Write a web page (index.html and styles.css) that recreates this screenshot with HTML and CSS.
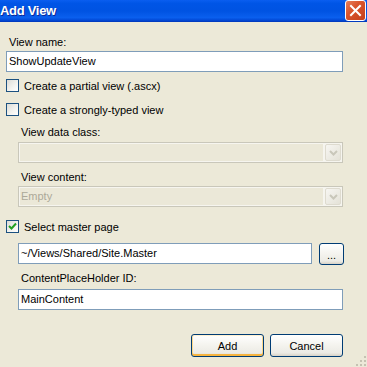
FILE: index.html
```html
<!DOCTYPE html>
<html lang="en">
<head>
    <meta charset="UTF-8">
    <title>Add View</title>
    <link rel="stylesheet" href="styles.css">
</head>
<body>
    <div class="dialog">
        <div class="titlebar">
            <span class="title">Add View</span>
            <div class="close-btn">
                <svg width="13" height="13" viewBox="0 0 13 13">
                    <path d="M2 2 L11 11 M11 2 L2 11" stroke="#fff" stroke-width="2" stroke-linecap="square"/>
                </svg>
            </div>
        </div>

        <div class="content">
            <div class="label first">View name:</div>
            <div class="textbox name-box">ShowUpdateView</div>

            <div class="check-row partial-row">
                <span class="box"></span>
                <span>Create a partial view (.ascx)</span>
            </div>
            <div class="check-row typed-row">
                <span class="box"></span>
                <span>Create a strongly-typed view</span>
            </div>

            <div class="label indent class-label">View data class:</div>
            <div class="select indent">
                <div class="select-field"></div>
                <div class="select-arrow">
                    <svg width="9" height="6" viewBox="0 0 9 6"><path d="M1 1 L4.5 4.5 L8 1" stroke="#c9c7ba" stroke-width="2" fill="none"/></svg>
                </div>
            </div>

            <div class="label indent content-label">View content:</div>
            <div class="select indent">
                <div class="select-field">Empty</div>
                <div class="select-arrow">
                    <svg width="9" height="6" viewBox="0 0 9 6"><path d="M1 1 L4.5 4.5 L8 1" stroke="#c9c7ba" stroke-width="2" fill="none"/></svg>
                </div>
            </div>

            <div class="check-row master-row">
                <span class="box">
                    <svg width="11" height="11" viewBox="0 0 11 11"><path d="M2 5 L4.5 7.5 L9 2.5" stroke="#21a121" stroke-width="2" fill="none"/></svg>
                </span>
                <span>Select master page</span>
            </div>

            <div class="master-line indent">
                <div class="textbox master-box">~/Views/Shared/Site.Master</div>
                <div class="xp-btn browse-btn">...</div>
            </div>

            <div class="label indent holder-label">ContentPlaceHolder ID:</div>
            <div class="textbox indent">MainContent</div>
        </div>

        <div class="footer">
            <div class="xp-btn default">Add</div>
            <div class="xp-btn">Cancel</div>
        </div>

        <svg class="grip" width="12" height="12" viewBox="0 0 12 12">
            <rect x="10" y="2" width="2" height="2" fill="#c5c2b2"/>
            <rect x="6" y="6" width="2" height="2" fill="#c5c2b2"/>
            <rect x="10" y="6" width="2" height="2" fill="#c5c2b2"/>
            <rect x="2" y="10" width="2" height="2" fill="#c5c2b2"/>
            <rect x="6" y="10" width="2" height="2" fill="#c5c2b2"/>
            <rect x="10" y="10" width="2" height="2" fill="#c5c2b2"/>
        </svg>
    </div>
</body>
</html>
```

FILE: styles.css
```css
* {
    box-sizing: border-box;
}
body {
    margin: 0;
    background: #ece9d8;
    font-family: "Liberation Sans", Arial, sans-serif;
    font-size: 11px;
    color: #000;
}
.dialog {
    width: 367px;
    height: 367px;
    position: relative;
    overflow: hidden;
    display: flex;
    flex-direction: column;
}
.titlebar {
    height: 22px;
    flex: none;
    display: flex;
    align-items: flex-start;
    justify-content: space-between;
    background: linear-gradient(to bottom, #0a5ef0 0%, #0055e6 15%, #0053e2 50%, #0a5fee 80%, #0249d6 92%, #0036b8 100%);
    padding-right: 1px;
}
.title {
    margin-left: 0;
    margin-top: 3px;
    font-size: 13px;
    font-weight: bold;
    letter-spacing: -0.3px;
    color: #fff;
    text-shadow: 1px 1px 0 #0a2a9a;
}
.close-btn {
    width: 21px;
    height: 21px;
    border: 1px solid #fff;
    border-radius: 3px;
    background: linear-gradient(135deg, #e8805c 0%, #d9542c 40%, #c4401c 100%);
    display: flex;
    align-items: center;
    justify-content: center;
}
.content {
    display: flex;
    flex-direction: column;
    padding: 0 24px 0 6px;
}
.label {
    height: 14px;
    line-height: 14px;
    padding-left: 3px;
}
.indent {
    margin-left: 12px;
}
.first {
    margin-top: 13px;
}
.class-label {
    margin-top: 9px;
}
.content-label {
    margin-top: 7px;
}
.holder-label {
    margin-top: 6px;
}
.textbox {
    height: 21px;
    line-height: 19px;
    border: 1px solid #7f9db9;
    background: #fff;
    padding-left: 2px;
    white-space: nowrap;
}
.name-box {
    margin-top: 2px;
}
.holder-label + .textbox {
    margin-top: 4px;
}
.check-row {
    display: flex;
    align-items: center;
    gap: 5px;
    height: 13px;
}
.partial-row {
    margin-top: 7px;
}
.typed-row {
    margin-top: 11px;
}
.master-row {
    margin-top: 13px;
}
.box {
    width: 13px;
    height: 13px;
    border: 1px solid #1c5180;
    background: linear-gradient(135deg, #dcdcd7 0%, #f4f4f0 60%, #fff 100%);
    display: flex;
    align-items: center;
    justify-content: center;
}
.select {
    height: 21px;
    margin-top: 3px;
    border: 1px solid #c9c7ba;
    background: #f6f5ef;
    padding: 1px;
    display: flex;
    gap: 2px;
}
.content-label + .select {
    margin-top: 2px;
}
.select-field {
    flex: 1;
    background: #ebe8d8;
    color: #aca899;
    line-height: 17px;
    padding-left: 1px;
}
.select-arrow {
    width: 16px;
    border-radius: 2px;
    background: linear-gradient(135deg, #f7f6f2, #e4e2d7);
    border: 1px solid #dedbcf;
    display: flex;
    align-items: center;
    justify-content: center;
}
.master-line {
    margin-top: 10px;
    display: flex;
    gap: 7px;
    align-items: flex-start;
}
.master-box {
    flex: 1;
}
.xp-btn {
    width: 73px;
    height: 23px;
    border: 1px solid #003c74;
    border-radius: 3px;
    background: linear-gradient(to bottom, #fff 0%, #f4f3ee 50%, #ecebe5 85%, #d8d2c6 100%);
    display: flex;
    align-items: center;
    justify-content: center;
}
.xp-btn.default {
    box-shadow: inset 0 1px 0 #fff0cf, inset 0 -2px 0 #f6b440, inset 1px 0 0 #fdd889, inset -1px 0 0 #fdd889;
}
.browse-btn {
    width: 25px;
    height: 22px;
    margin-right: -1px;
    padding-top: 2px;
}
.footer {
    margin-top: 24px;
    display: flex;
    justify-content: flex-end;
    gap: 6px;
    padding-right: 24px;
}
.grip {
    position: absolute;
    right: 1px;
    bottom: 1px;
}
```
